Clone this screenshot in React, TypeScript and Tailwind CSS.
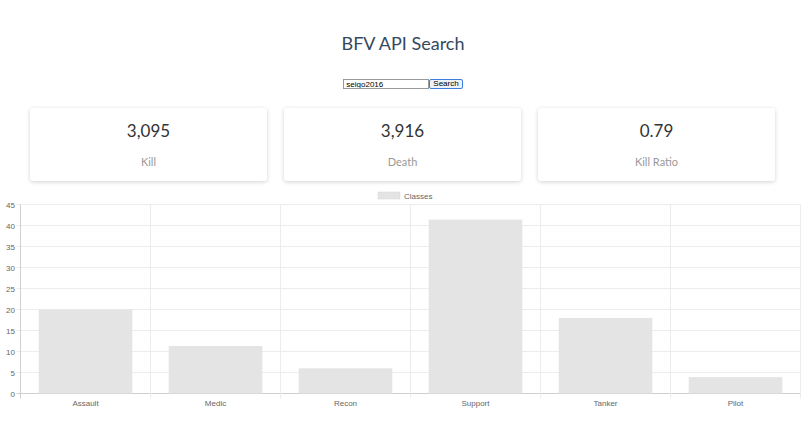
import React from 'react';

const stats = [
    { value: '3,095', label: 'Kill' },
    { value: '3,916', label: 'Death' },
    { value: '0.79', label: 'Kill Ratio' },
];

const classes = [
    { name: 'Assault', value: 20 },
    { name: 'Medic', value: 11.3 },
    { name: 'Recon', value: 6 },
    { name: 'Support', value: 41.4 },
    { name: 'Tanker', value: 18 },
    { name: 'Pilot', value: 3.9 },
];

const ClassChart = () => {
    const left = 20.5;
    const right = 800.5;
    const top = 19.5;
    const bottom = 208.5;
    const max = 45;
    const step = (right - left) / classes.length;
    const yOf = (v: number) => bottom - (v / max) * (bottom - top);
    const ticks = [0, 5, 10, 15, 20, 25, 30, 35, 40, 45];

    return (
        <svg width="806" height="225" viewBox="0 0 806 225" className="block" style={{ fontFamily: '"Liberation Sans", Arial, sans-serif' }}>
            {/* legend */}
            <rect x="378" y="7" width="22" height="7" fill="#e4e4e4" stroke="#d6d6d6" strokeWidth="0.5" />
            <text x="404" y="13.5" fontSize="8" fill="#666">Classes</text>

            {/* horizontal grid */}
            {ticks.map((t) => (
                <g key={t}>
                    <line x1={left - 4} x2={right} y1={yOf(t)} y2={yOf(t)} stroke={t === 0 ? '#cfcfcf' : '#ececec'} strokeWidth="1" />
                    <text x="15" y={yOf(t) + 3} fontSize="8" fill="#666" textAnchor="end">{t}</text>
                </g>
            ))}

            {/* vertical grid */}
            {Array.from({ length: classes.length + 1 }).map((_, i) => (
                <line key={i} x1={left + i * step} x2={left + i * step} y1={top} y2={bottom + 5} stroke={i === 0 ? '#cfcfcf' : '#ececec'} strokeWidth="1" />
            ))}

            {/* bars */}
            {classes.map((c, i) => {
                const w = step * 0.72;
                const x = left + i * step + (step - w) / 2;
                const y = yOf(c.value);
                return (
                    <g key={c.name}>
                        <rect x={x} y={y} width={w} height={bottom - y} fill="#e4e4e4" />
                        <text x={left + i * step + step / 2} y="221" fontSize="8" fill="#666" textAnchor="middle">{c.name}</text>
                    </g>
                );
            })}
        </svg>
    );
};

export default function App() {
    return (
        <div className="w-[806px] h-[439px] bg-white overflow-hidden" style={{ fontFamily: 'Lato, "Noto Sans", sans-serif' }}>
            <h1 className="pt-[32px] text-center text-[18px] leading-[22px] font-normal text-[#34495e]">BFV API Search</h1>

            <div className="mt-[25px] flex justify-center">
                <input
                    defaultValue="seigo2016"
                    className="w-[86px] h-[10px] border border-[#999] px-[2px] text-[8px] leading-[8px] text-black outline-none"
                    style={{ fontFamily: '"Liberation Sans", Arial, sans-serif' }}
                />
                <button
                    className="h-[10px] px-[3px] border border-[#3b7de0] rounded-[2px] bg-[#eef1f5] text-[8px] leading-[8px] text-black"
                    style={{ fontFamily: '"Liberation Sans", Arial, sans-serif' }}
                >
                    Search
                </button>
            </div>

            <div className="mt-[19px] px-[30px] flex gap-[17px]">
                {stats.map((s) => (
                    <div key={s.label} className="w-[237px] h-[73px] rounded-[3px] bg-white shadow-[0_1px_4px_rgba(0,0,0,0.18)] flex flex-col items-center">
                        <div className="mt-[13px] text-[17px] leading-[20px] font-normal text-[#333]">{s.value}</div>
                        <div className="mt-[14px] text-[11px] leading-[14px] font-normal text-[#999]">{s.label}</div>
                    </div>
                ))}
            </div>

            <div className="mt-[4px]">
                <ClassChart />
            </div>
        </div>
    );
}
